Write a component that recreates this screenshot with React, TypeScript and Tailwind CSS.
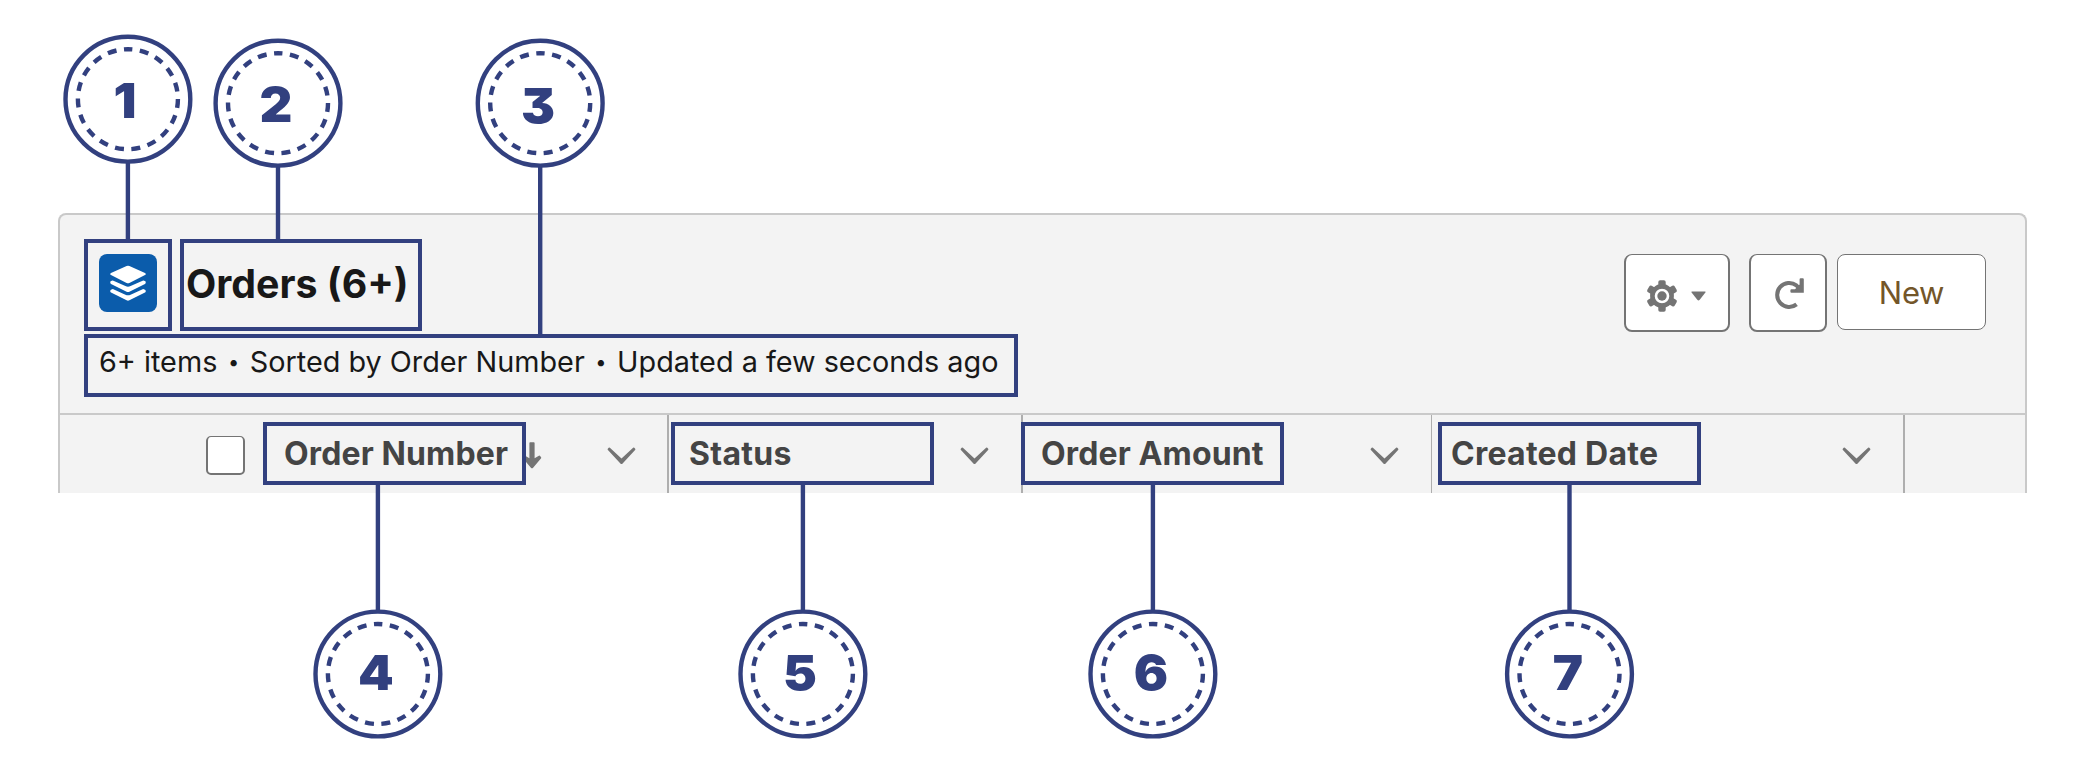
type Callout = { n: string; cx: number; cy: number; dx: number; dy: number; from: number; to: number };
type Region = { left: number; top: number; width: number; height: number };

const callouts: Callout[] = [
  { n: "1", cx: 127.9, cy: 99.2, dx: -3, dy: 2, from: 162, to: 241 },
  { n: "2", cx: 278, cy: 103.2, dx: -2, dy: 2, from: 166, to: 241 },
  { n: "3", cx: 540.2, cy: 103.2, dx: -2, dy: 2.8, from: 166, to: 336 },
  { n: "4", cx: 377.9, cy: 674, dx: -2, dy: -1, from: 483, to: 611 },
  { n: "5", cx: 802.9, cy: 674, dx: -3, dy: -1, from: 483, to: 611 },
  { n: "6", cx: 1152.9, cy: 674, dx: -2, dy: -1, from: 483, to: 611 },
  { n: "7", cx: 1569.5, cy: 674, dx: -2, dy: -1, from: 483, to: 611 },
];

const regions: Region[] = [
  { left: 84, top: 239, width: 88, height: 92 },
  { left: 180, top: 239, width: 242, height: 92 },
  { left: 84, top: 334, width: 934, height: 63 },
  { left: 263, top: 422, width: 263, height: 63 },
  { left: 671, top: 422, width: 263, height: 63 },
  { left: 1021, top: 422, width: 263, height: 63 },
  { left: 1438, top: 422, width: 263, height: 63 },
];

function StackIcon() {
  return (
    <div className="size-[58px] shrink-0 rounded-[8px] bg-[#0b5cab]">
      <svg viewBox="0 0 58 58" className="size-full" fill="#fff">
        <path d="M27.6 12a3 3 0 0 1 2.8 0L46 18.9c1 .5 1 1.7 0 2.2L30.4 29a3 3 0 0 1-2.8 0L12 21.1c-1-.5-1-1.7 0-2.2z" />
        <path d="M12 27.1l1.8-.6 12.6 5.6a6 6 0 0 0 5.2 0l12.6-5.6 1.8.6c1 .5 1 2.3 0 2.8l-15.6 7.8a3 3 0 0 1-2.8 0L12 29.9c-1-.5-1-2.3 0-2.8z" />
        <path d="M12 35.7l1.8-.6 12.6 5.6a6 6 0 0 0 5.2 0l12.6-5.6 1.8.6c1 .5 1 2.3 0 2.8L30.4 46.3a3 3 0 0 1-2.8 0L12 38.5c-1-.5-1-2.3 0-2.8z" />
      </svg>
    </div>
  );
}

function GearIcon() {
  return (
    <svg width="32" height="32" viewBox="-16 -16 32 32" fill="#747474" className="mt-[7px] shrink-0">
      {[0, 60, 120, 180, 240, 300].map((a) => (
        <rect key={a} x="-3.7" y="-15.8" width="7.4" height="8" rx="1.8" transform={`rotate(${a})`} />
      ))}
      <circle r="9.6" fill="none" stroke="#747474" strokeWidth="4.6" />
      <circle r="4.7" />
    </svg>
  );
}

function RefreshIcon() {
  return (
    <svg width="32" height="32" viewBox="0 0 32 32" className="mt-[2px] shrink-0" fill="none">
      <path d="M23.6 26.4A12 12 0 1 1 23.4 7.4L27 11" stroke="#747474" strokeWidth="4" />
      <path d="M26.6 1.2q0-1 1-1h2.2q1 0 1 1V14.8H18.4q-1 0-1-1V12.2q0-1 1-1H22l4.6-4.6z" fill="#747474" />
    </svg>
  );
}

function Chevron() {
  return (
    <svg width="29" height="18" viewBox="0 0 29 18" fill="#747474" className="shrink-0">
      <path d="M.8 1.8L1.7.8q.6-.5 1.2 0L14.5 11.6 26.1.8q.6-.5 1.2 0l.9 1q.5.6-.1 1.1L15.6 16.5q-1.1 1.1-2.2 0L.9 2.9Q.3 2.4.8 1.8z" />
    </svg>
  );
}

function SortArrow() {
  return (
    <svg width="20" height="27" viewBox="0 0 20 27" fill="#747474" className="ml-[15px] shrink-0">
      <path d="M7.4 1q0-.8.8-.8h3.6q.8 0 .8.8v15.3l4.3-2.5q.7-.5 1.2.2l1 1.3q.4.7-.2 1.2l-7.8 9.3q-1.1 1-2.2 0L1.1 16.5q-.6-.5-.2-1.2l1-1.3q.5-.7 1.2-.2l4.3 2.5z" />
    </svg>
  );
}

function Dot() {
  return <span className="relative -top-[3px] inline-block w-[16.2px] text-center text-[20px] leading-none">•</span>;
}

export default function App() {
  return (
    <div className="relative h-[777px] w-[2084px] overflow-hidden bg-white pt-[213px] pl-[58px] font-['Inter',sans-serif]">
      <section className="flex h-[280px] w-[1969px] flex-col rounded-t-[8px] border-2 border-b-0 border-[#c9c9c9] bg-[#f3f3f3]">
        <header className="flex h-[198px] justify-between pt-[39px] pr-[39px] pl-[39px]">
          <div className="flex flex-col">
            <div className="flex h-[58px] items-center gap-[29px]">
              <StackIcon />
              <h1 className="mt-[2px] text-[39.3px] leading-none font-bold whitespace-nowrap text-[#181818]">Orders (6+)</h1>
            </div>
            <p className="mt-[30px] text-[28.8px] leading-[40px] whitespace-nowrap text-[#181818]">
              6+ items <Dot /> Sorted by Order Number <Dot /> Updated a few seconds ago
            </p>
          </div>
          <div className="flex items-start">
            <button className="flex h-[78px] w-[106px] items-center rounded-[8px] border-2 border-t border-[#747474] bg-white pl-[20px]">
              <GearIcon />
              <svg width="15" height="10" viewBox="0 0 15 10" className="mt-[6px] ml-[13px]" fill="#747474">
                <path d="M.9.4h13.2q.9.3.3 1.2L8.7 8.8q-1.2 1.3-2.4 0L.6 1.6Q0 .7.9.4z" />
              </svg>
            </button>
            <button className="ml-[19px] flex h-[78px] w-[78px] items-center rounded-[8px] border-2 border-t border-[#747474] bg-white pl-[22px]">
              <RefreshIcon />
            </button>
            <button className="ml-[10px] flex h-[76px] w-[149px] items-center justify-center rounded-[8px] border border-[#747474] bg-white pt-[2px] text-[31px] tracking-[-0.3px] text-[#735629]">
              New
            </button>
          </div>
        </header>
        <div className="flex h-[80px] border-t-2 border-[#c9c9c9] text-[32px] leading-none font-bold text-[#444444]">
          <div className="flex w-[609px] items-center border-r-2 border-[#aeaeae] pr-[31px] pl-[146px]">
            <span className="mt-[3px] size-[39px] rounded-[5px] border-2 border-t border-[#747474] bg-white" />
            <span className="ml-[39px] tracking-[0.13px] whitespace-nowrap">Order Number</span>
            <span className="mt-[2px] -ml-[1px]"><SortArrow /></span>
            <span className="mt-[3px] ml-auto"><Chevron /></span>
          </div>
          <div className="flex w-[354px] items-center justify-between border-r-2 border-[#aeaeae] pr-[32px] pl-[20px]">
            <span className="tracking-[0.3px]">Status</span>
            <span className="mt-[3px]"><Chevron /></span>
          </div>
          <div className="flex w-[409px] items-center justify-between border-r border-[#aeaeae] pr-[32px] pl-[18px]">
            <span className="tracking-[0.13px]">Order Amount</span>
            <span className="mt-[3px]"><Chevron /></span>
          </div>
          <div className="flex w-[473px] items-center justify-between border-r-2 border-[#aeaeae] pr-[32px] pl-[19px]">
            <span className="tracking-[0.25px]">Created Date</span>
            <span className="mt-[3px]"><Chevron /></span>
          </div>
        </div>
      </section>

      {regions.map((r) => (
        <div key={`${r.left}-${r.top}`} className="absolute border-4 border-[#32407f]" style={r} />
      ))}
      <svg className="absolute inset-0" width="2084" height="777" viewBox="0 0 2084 777" fill="none" stroke="#32407f" strokeWidth="4.4">
        {callouts.map((c) => (
          <g key={c.n}>
            <line x1={c.cx} x2={c.cx} y1={c.from} y2={c.to} />
            <circle cx={c.cx} cy={c.cy} r="62.4" fill="#fff" />
            <circle
              cx={c.cx}
              cy={c.cy}
              r="50"
              strokeDasharray="9 7.535"
              strokeDashoffset="4.5"
              transform={`rotate(-90 ${c.cx} ${c.cy})`}
            />
          </g>
        ))}
      </svg>
      {callouts.map((c) => (
        <div
          key={c.n}
          className="absolute flex h-[60px] w-[60px] scale-x-105 items-center justify-center text-[48.5px] leading-none font-black text-[#32407f] [font-feature-settings:'cv09']"
          style={{ left: c.cx + c.dx - 30, top: c.cy + c.dy - 30 }}
        >
          {c.n}
        </div>
      ))}
    </div>
  );
}
